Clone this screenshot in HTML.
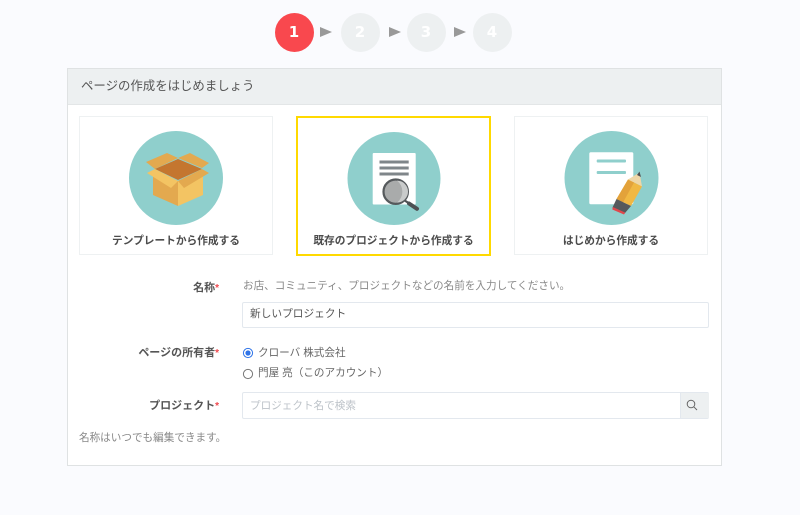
<!DOCTYPE html>
<html lang="ja">
<head>
<meta charset="utf-8">
<title>ページの作成</title>
<style>
html,body{margin:0;padding:0;width:800px;height:515px;overflow:hidden;background:#fafbfe}
body{position:relative;font-family:"Liberation Sans","Noto Sans CJK JP",sans-serif;color:#555;filter:blur(.35px)}
.a{position:absolute;white-space:nowrap}
.step{position:absolute;top:12.5px;width:39px;height:39px;border-radius:50%;background:#edf0f1;color:#fff;font-family:"DejaVu Sans",sans-serif;font-weight:700;font-size:15px;line-height:39px;text-align:center}
.tri{position:absolute;top:26.5px;width:0;height:0;border-left:12px solid #999;border-top:5.5px solid transparent;border-bottom:5.5px solid transparent}
.panel{position:absolute;left:67px;top:68px;width:653px;height:396px;background:#fff;border:1px solid #dfe2e3}
.head{position:absolute;left:0;top:0;width:653px;height:35px;background:#edf0f1;border-bottom:1px solid #e3e6e7}
.card{position:absolute;box-sizing:border-box;background:#fff;border:1px solid #eef1f2}
.cap{position:absolute;font-size:10.7px;font-weight:700;color:#4c4c4c;text-align:center;white-space:nowrap;line-height:14px}
.lab{position:absolute;font-size:11px;font-weight:700;color:#555;text-align:right;white-space:nowrap;line-height:14px}
.lab i{color:#f0484e;font-style:normal;font-size:10px}
.txt{position:absolute;font-size:10.6px;color:#888;white-space:nowrap;line-height:14px}
.box{position:absolute;box-sizing:border-box;background:#fff;border:1px solid #e3e8ee;border-radius:2px}
</style>
</head>
<body>
<div class="step" style="left:274.5px;background:#f9484e">1</div>
<div class="tri" style="left:320px"></div>
<div class="step" style="left:340.5px">2</div>
<div class="tri" style="left:388.5px"></div>
<div class="step" style="left:406.5px">3</div>
<div class="tri" style="left:453.5px"></div>
<div class="step" style="left:472.5px">4</div>

<div class="panel"><div class="head"></div></div>
<div class="a" style="left:81px;top:78px;font-size:12.42px;line-height:16px;color:#555">ページの作成をはじめましょう</div>

<div class="card" style="left:79px;top:116px;width:194px;height:139px"></div>
<div class="card" style="left:296px;top:116px;width:195px;height:140px;border:2.5px solid #ffd900"></div>
<div class="card" style="left:514px;top:116px;width:194px;height:139px"></div>

<svg class="a" style="left:0;top:0" width="800" height="515" viewBox="0 0 800 515">
  <circle cx="176" cy="178" r="47" fill="#8fcfcc"/>
  <circle cx="394" cy="178.5" r="46.5" fill="#8fcfcc"/>
  <circle cx="611.5" cy="178" r="47" fill="#8fcfcc"/>
  <!-- box -->
  <polygon points="146,162 167,153 178,158 155,169" fill="#e3a94f"/>
  <polygon points="178,158 190,153 209,163 202,168" fill="#e3a94f"/>
  <polygon points="155,169 178,159 202,169 178,180" fill="#c4762f"/>
  <polygon points="153,172 178,181 178,206 153,195" fill="#e3a94f"/>
  <polygon points="203,172 178,181 178,206 203,195" fill="#f3c463"/>
  <polygon points="147,173 155,169 178,181 171,188" fill="#f3c463"/>
  <polygon points="178,181 202,169 209,173 184,188" fill="#e3a94f"/>
  <!-- doc + magnifier -->
  <rect x="372.7" y="153" width="43" height="51.5" rx="1" fill="#fff"/>
  <rect x="379.5" y="160.5" width="29.2" height="3" fill="#7f868a"/>
  <rect x="379.5" y="166.5" width="29.2" height="3" fill="#7f868a"/>
  <rect x="379.5" y="172.5" width="29.2" height="3" fill="#7f868a"/>
  <line x1="404" y1="200" x2="410" y2="204" stroke="#4d5053" stroke-width="2.2"/>
  <line x1="409" y1="203.5" x2="417" y2="208.8" stroke="#4d5053" stroke-width="4" stroke-linecap="round"/>
  <circle cx="395.7" cy="191.7" r="12.2" fill="#a9abab" stroke="#55595c" stroke-width="2.2"/>
  <path d="M397 180.6a11 11 0 0 1 0 22a14 14 0 0 0 0-22z" fill="#c9cbcb"/>
  <!-- doc + pencil -->
  <rect x="589.3" y="152.3" width="44" height="52" rx="1.5" fill="#fff"/>
  <rect x="596.7" y="159.5" width="29.3" height="3" rx="1" fill="#8fcfcc"/>
  <rect x="596.7" y="171" width="29.3" height="3" rx="1" fill="#8fcfcc"/>
  <polygon points="628,179.5 642,186.5 639.5,172.5" fill="#eed7a8"/>
  <polygon points="637,175 641,177 639.5,171.5" fill="#4d5053"/>
  <polygon points="628,179.5 642,186.5 631,206 616.5,199" fill="#f0b843"/>
  <polygon points="628,179.5 634,182.5 623,202.5 616.5,199" fill="#e3a23a"/>
  <polygon points="616.5,199 631,206 625,213 612.5,207.5" fill="#55595c"/>
  <polygon points="612.8,207 625.3,212.6 624,214.5 612.3,209.5" fill="#e0474c"/>
</svg>

<div class="cap" style="left:79px;top:234px;width:194px">テンプレートから作成する</div>
<div class="cap" style="left:296px;top:234px;width:195px">既存のプロジェクトから作成する</div>
<div class="cap" style="left:514px;top:234px;width:194px">はじめから作成する</div>

<div class="lab" style="right:581px;top:281px">名称<i>*</i></div>
<div class="txt" style="left:243px;top:279px">お店、コミュニティ、プロジェクトなどの名前を入力してください。</div>
<div class="box" style="left:242px;top:302px;width:467px;height:26px"></div>
<div class="a" style="left:250px;top:307px;font-size:10.7px;line-height:14px;color:#555">新しいプロジェクト</div>

<div class="lab" style="right:581px;top:346px">ページの所有者<i>*</i></div>
<svg class="a" style="left:242px;top:347px" width="12" height="12" viewBox="0 0 12 12">
  <circle cx="6" cy="6" r="4.6" fill="#fff" stroke="#2f74e8" stroke-width="1"/>
  <circle cx="6" cy="6" r="2.6" fill="#2f74e8"/>
</svg>
<div class="txt" style="left:258px;top:346px;color:#666">クローバ 株式会社</div>
<svg class="a" style="left:242px;top:368px" width="12" height="12" viewBox="0 0 12 12">
  <circle cx="6" cy="6" r="4.6" fill="#fff" stroke="#777" stroke-width="1"/>
</svg>
<div class="txt" style="left:258px;top:366px;color:#666">門屋 亮（このアカウント）</div>

<div class="lab" style="right:581px;top:399px">プロジェクト<i>*</i></div>
<div class="box" style="left:242px;top:392px;width:467px;height:27px"></div>
<div class="a" style="left:680px;top:393px;width:28px;height:25px;background:#edf0f1;border-left:1px solid #e3e8ee"></div>
<div class="txt" style="left:250px;top:399px;color:#bcc2c8">プロジェクト名で検索</div>
<svg class="a" style="left:686px;top:399px" width="12" height="12" viewBox="0 0 12 12" fill="none" stroke="#666" stroke-width="1">
  <circle cx="5" cy="5" r="3.8"/><line x1="7.8" y1="7.8" x2="11" y2="11"/>
</svg>
<div class="txt" style="left:79px;top:431px">名称はいつでも編集できます。</div>
</body>
</html>
